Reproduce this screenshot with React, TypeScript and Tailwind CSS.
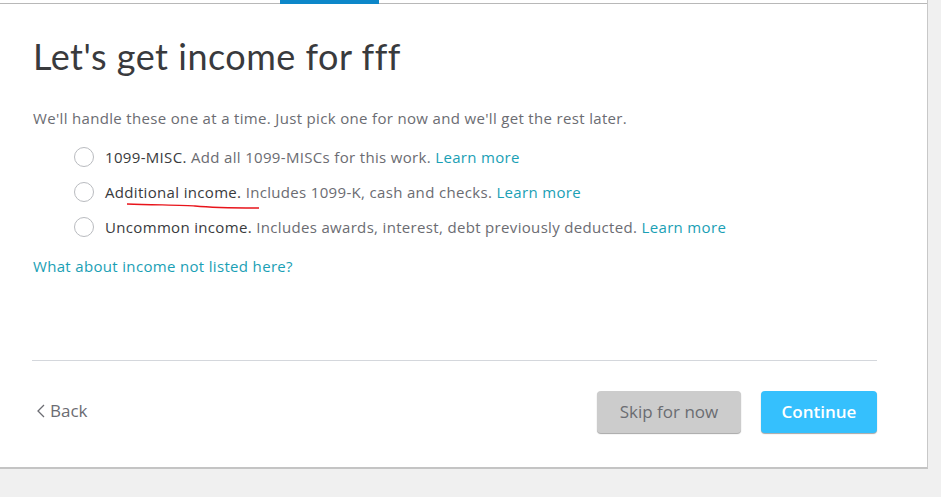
import React from "react";

const font = { fontFamily: "Lato, 'Open Sans', 'Noto Sans', sans-serif" };
const body = { fontFamily: "'Open Sans', Lato, 'Noto Sans', sans-serif" };

function Radio() {
  return (
    <span className="inline-block w-[20px] h-[20px] rounded-full border border-[#b9bbbf] bg-white flex items-center justify-center shrink-0">
      <span className="w-[14px] h-[14px] rounded-full bg-[#e9e9ea]" />
    </span>
  );
}

function Option({ label, desc }: { label: string; desc: string }) {
  return (
    <div className="flex items-center h-[35px]">
      <Radio />
      <div className="ml-[11px] text-[15px] tracking-[0.33px] whitespace-nowrap" style={body}>
        <span className="text-[#393a3d]">{label}</span>{" "}
        <span className="text-[#6b6c72]">{desc}</span>{" "}
        <span className="text-[#1aa0b5]">Learn more</span>
      </div>
    </div>
  );
}

export default function App() {
  return (
    <div className="w-[941px] h-[497px] bg-[#f0f0f0] relative overflow-hidden" style={font}>
      <div className="w-[928px] h-[469px] bg-white border-r border-[#c8c8c8] border-b-2 border-b-[#c4c4c4] relative">
        <div className="h-[4px] border-b border-[#b8b8b8] relative">
          <div className="absolute left-[280px] top-0 w-[99px] h-[4px] bg-[#0d87c9]" />
        </div>
        <div className="pl-[33px] pr-[50px]">
          <h1 className="text-[36px] text-[#393a3d] leading-none mt-[34px] tracking-[0.5px]">Let's get income for fff</h1>
          <p className="text-[15px] tracking-[0.33px] text-[#6b6c72] mt-[33px]" style={body}>We'll handle these one at a time. Just pick one for now and we'll get the rest later.</p>
          <div className="ml-[41px] mt-[10px]">
            <Option label="1099-MISC." desc="Add all 1099-MISCs for this work." />
            <Option label="Additional income." desc="Includes 1099-K, cash and checks." />
            <Option label="Uncommon income." desc="Includes awards, interest, debt previously deducted." />
          </div>
          <div className="text-[15px] tracking-[0.33px] text-[#1aa0b5] mt-[10px] font-medium" style={body}>What about income not listed here?</div>
          <div className="border-t border-[#d4d7dc] mt-[83px] w-[845px] -ml-px" />
          <div className="flex items-center justify-between w-[844px] mt-[30px]" style={body}>
            <div className="flex items-center text-[17px] text-[#6b6c72] mt-[-2px] ml-[2px]">
              <svg width="12" height="16" viewBox="0 0 12 16" className="mr-[3px]">
                <path d="M9 2 L3 8 L9 14" fill="none" stroke="#6b6c72" strokeWidth="1.3" />
              </svg>
              Back
            </div>
            <div className="flex gap-[20px]">
              <button className="w-[144px] h-[42px] rounded-[4px] bg-[#cccccc] text-[#6b6c72] text-[17px] shadow-[0_1px_1px_rgba(0,0,0,0.35)]">Skip for now</button>
              <button className="w-[116px] h-[42px] rounded-[4px] bg-[#35c0fd] text-white text-[17px] font-semibold shadow-[0_1px_1px_rgba(0,0,0,0.35)]">Continue</button>
            </div>
          </div>
        </div>
        <svg className="absolute left-[125px] top-[202px]" width="136" height="10" viewBox="0 0 136 10">
          <path d="M2 2 C30 3, 60 3, 70 4 S110 6, 134 6" fill="none" stroke="#e8141b" strokeWidth="1.4" />
        </svg>
      </div>
    </div>
  );
}
